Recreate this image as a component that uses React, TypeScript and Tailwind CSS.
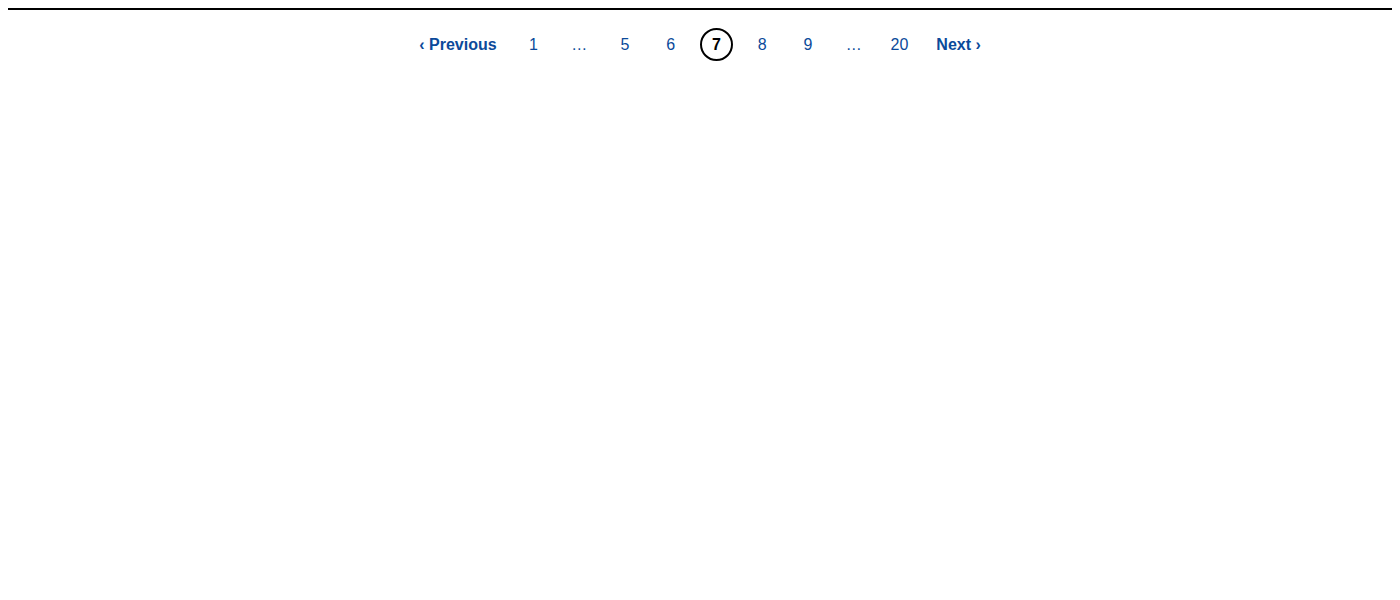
export default function App() {
  const pages: (number | string)[] = [1, "…", 5, 6, 7, 8, 9, "…", 20];
  const current = 7;

  return (
    <div className="min-h-screen bg-white px-2 pt-2 font-['Liberation_Sans',Arial,sans-serif] text-[16px]">
      <hr className="border-0 border-t-2 border-black" />
      <nav className="mt-[18px] flex items-center justify-center">
        <a className="mr-[14px] font-bold text-[#0b4a9a]" href="#">
          ‹ Previous
        </a>
        {pages.map((p, i) => (
          <div key={i} className="flex w-[45.75px] items-center justify-center">
            {p === current ? (
              <span className="flex h-[33px] w-[33px] items-center justify-center rounded-full border-2 border-black font-bold text-black">
                {p}
              </span>
            ) : p === "…" ? (
              <span className="flex h-[33px] items-center pt-[1px] text-[#0b4a9a]">{p}</span>
            ) : (
              <a href="#" className="flex h-[33px] items-center pt-[1px] text-[#0b4a9a]">
                {p}
              </a>
            )}
          </div>
        ))}
        <a className="ml-[14px] font-bold text-[#0b4a9a]" href="#">
          Next ›
        </a>
      </nav>
    </div>
  );
}
